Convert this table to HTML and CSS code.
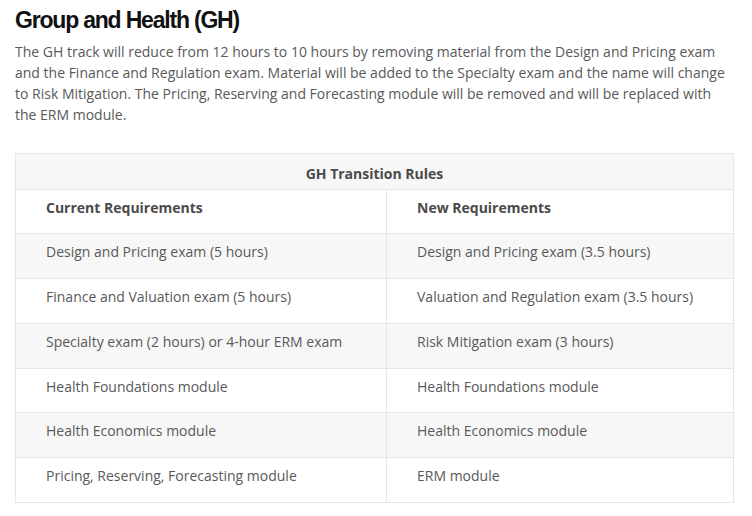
FILE: index.html
```html
<!DOCTYPE html>
<html lang="en">
<head>
<meta charset="utf-8">
<title>Group and Health (GH)</title>
<link rel="stylesheet" href="styles.css">
</head>
<body>
<main class="page">
  <h2 class="title">Group and Health (GH)</h2>
  <p class="intro">The GH track will reduce from 12 hours to 10 hours by removing material from the Design and Pricing exam and the Finance and Regulation exam. Material will be added to the Specialty exam and the name will change to Risk Mitigation. The Pricing, Reserving and Forecasting module will be removed and will be replaced with the ERM module.</p>
  <table class="rules">
    <colgroup>
      <col class="col-a">
      <col class="col-b">
    </colgroup>
    <thead>
      <tr class="caption-row"><th colspan="2">GH Transition Rules</th></tr>
    </thead>
    <tbody>
      <tr class="head-row"><th>Current Requirements</th><th>New Requirements</th></tr>
      <tr><td>Design and Pricing exam (5 hours)</td><td>Design and Pricing exam (3.5 hours)</td></tr>
      <tr><td>Finance and Valuation exam (5 hours)</td><td>Valuation and Regulation exam (3.5 hours)</td></tr>
      <tr><td>Specialty exam (2 hours) or 4-hour ERM exam</td><td>Risk Mitigation exam (3 hours)</td></tr>
      <tr><td>Health Foundations module</td><td>Health Foundations module</td></tr>
      <tr><td>Health Economics module</td><td>Health Economics module</td></tr>
      <tr><td>Pricing, Reserving, Forecasting module</td><td>ERM module</td></tr>
    </tbody>
  </table>
</main>
</body>
</html>
```
FILE: styles.css
```css
html, body {
  margin: 0;
  padding: 0;
  background: #ffffff;
}
.page {
  width: 718px;
  padding: 6px 15px 0 15px;
  font-family: "Open Sans", "Noto Sans", sans-serif;
  color: #595959;
}
.title {
  margin: 0;
  font-family: "Liberation Sans", Arial, sans-serif;
  font-weight: bold;
  font-size: 23px;
  line-height: 28px;
  letter-spacing: -1.2px;
  color: #111111;
}
.intro {
  margin: 7px 0 0 0;
  font-size: 14px;
  line-height: 21px;
}
.rules {
  margin-top: 28px;
  width: 718px;
  border-collapse: collapse;
  table-layout: fixed;
  font-size: 14px;
  border: 1px solid #e4e7e9;
}
.col-a { width: 371px; }
.col-b { width: 347px; }
.rules th, .rules td {
  border: 1px solid #e4e7e9;
  text-align: left;
  line-height: 19.7px;
  padding: 8px 30px 16px;
  font-weight: normal;
}
.rules .caption-row th {
  text-align: center;
  font-weight: bold;
  padding: 10px 30px 5px;
  background: #f7f7f7;
  color: #4a4a4a;
}
.rules .head-row th {
  font-weight: bold;
  color: #4a4a4a;
}
.rules tbody tr:nth-child(even) td {
  background: #f7f7f7;
}
```
